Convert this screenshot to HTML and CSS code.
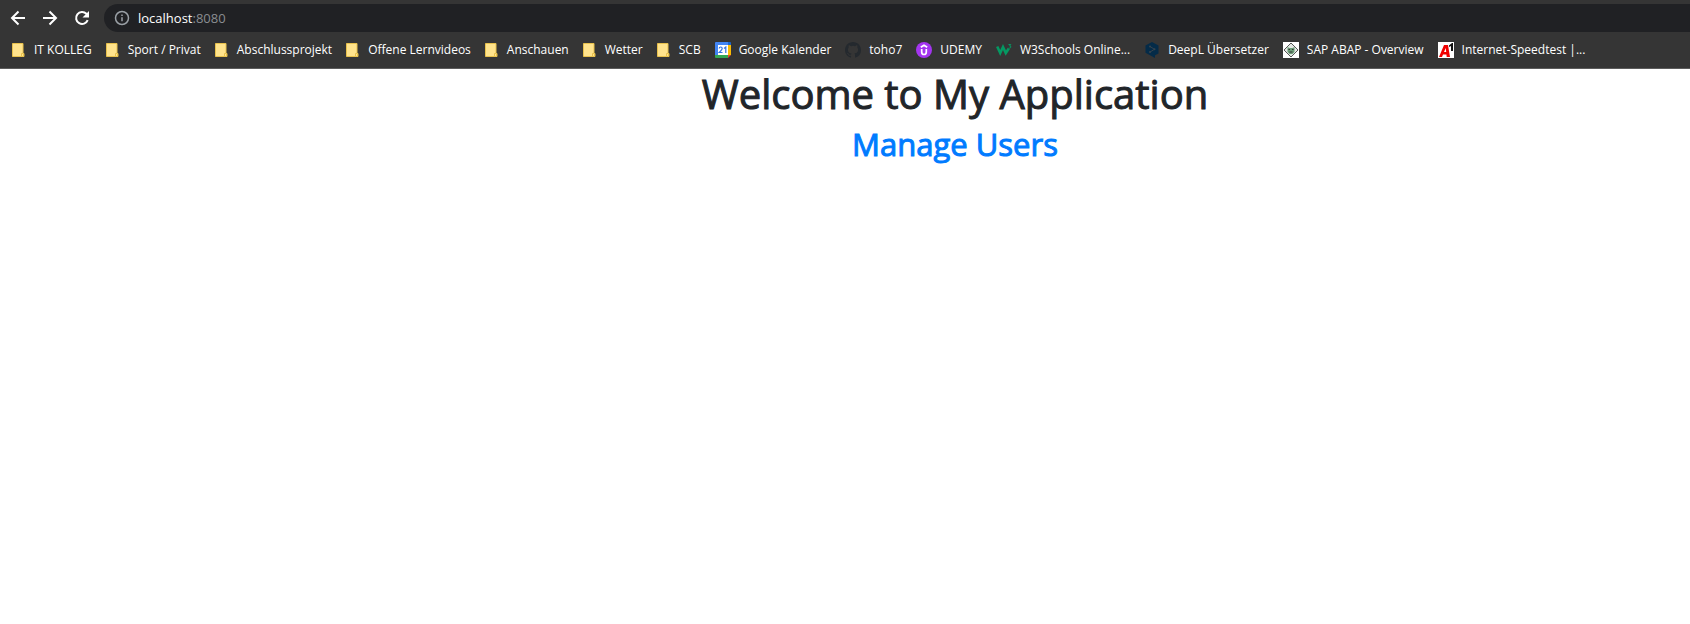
FILE: index.html
```html
<!DOCTYPE html>
<html lang="en">
<head>
<meta charset="utf-8">
<title>My Application</title>
<link rel="stylesheet" href="styles.css">
</head>
<body>
<svg width="0" height="0" class="defs" aria-hidden="true">
  <symbol id="folder" viewBox="0 0 16 16"><path d="M2.5 1.500h10.500v10h1v3h-11.500z" fill="#ffe38c" stroke="#e8c14c"/><path d="M11.500 14.500v-3h2v3z" fill="#ffe38c" stroke="#e8c14c"/></symbol>
</svg>
<header class="chrome">
  <div class="toolbar">
    <button class="nav" aria-label="Back"><svg viewBox="0 0 16 16"><path d="M15 8H2.500M8.500 1.500 2 8l6.500 6.500"/></svg></button>
    <button class="nav" aria-label="Forward"><svg viewBox="0 0 16 16"><path d="M1 8h12.500M7.500 1.500 14 8l-6.500 6.500"/></svg></button>
    <button class="nav" aria-label="Reload"><svg viewBox="0 0 16 16"><path d="M13.700 10.200A6 6 0 1 1 12.400 3.800L14 5.500"/><path d="M15 1v6.500H8.500z" class="solid"/></svg></button>
    <div class="address">
      <svg class="info" viewBox="0 0 16 16"><circle cx="8" cy="8" r="6.500"/><path d="M8 7.200v4M8 4.500v1.500"/></svg>
      <span class="host">localhost<span class="port">:8080</span></span>
    </div>
  </div>
  <nav class="bookmarks" aria-label="Bookmarks">
    <div class="group folders">
    <a href="#"><svg class="icon"><use href="#folder"/></svg>IT KOLLEG</a>
    <a href="#"><svg class="icon"><use href="#folder"/></svg>Sport / Privat</a>
    <a href="#"><svg class="icon"><use href="#folder"/></svg>Abschlussprojekt</a>
    <a href="#"><svg class="icon"><use href="#folder"/></svg>Offene Lernvideos</a>
    <a href="#"><svg class="icon"><use href="#folder"/></svg>Anschauen</a>
    <a href="#"><svg class="icon"><use href="#folder"/></svg>Wetter</a>
    <a href="#"><svg class="icon"><use href="#folder"/></svg>SCB</a>
    </div>
    <div class="group sites">
    <a href="#"><svg class="icon" viewBox="0 0 16 16"><path d="M0 1q0-1 1-1h12v13H0z" fill="#4285f4"/><path d="M13 3h3v10h-3z" fill="#fbbc04"/><path d="M0 13h13v3H1q-1 0-1-1z" fill="#34a853"/><path d="M13 0h2q1 0 1 1v2h-3z" fill="#1967d2"/><path d="M13 13h3l-3 3z" fill="#ea4335"/><path d="M3 3h10v10H3z" fill="#fff"/><path d="M4.200 6.500q0-1.500 1.500-1.500t1.500 1.500q0 1-3 4h3.300M9 6.500l1.800-1.500v6" fill="none" stroke="#3574e0" stroke-width="1.200"/></svg>Google Kalender</a>
    <a href="#"><svg class="icon" viewBox="0 0 16 16"><path fill="#24292e" d="M8 0C3.580 0 0 3.580 0 8c0 3.540 2.290 6.530 5.470 7.590.4.070.55-.17.55-.38 0-.19-.01-.82-.01-1.490-2.010.37-2.530-.49-2.690-.94-.09-.23-.48-.94-.82-1.130-.28-.15-.68-.52-.01-.53.63-.01 1.080.58 1.230.82.72 1.210 1.870.87 2.330.66.070-.52.28-.87.51-1.070-1.780-.2-3.640-.89-3.640-3.950 0-.87.31-1.590.82-2.150-.08-.2-.36-1.020.08-2.120 0 0 .67-.21 2.200.82a7.600 7.600 0 0 1 4 0c1.530-1.040 2.200-.82 2.200-.82.44 1.100.16 1.920.08 2.120.51.56.82 1.270.82 2.150 0 3.070-1.870 3.750-3.650 3.950.29.25.54.73.54 1.480 0 1.070-.01 1.930-.01 2.200 0 .21.15.46.55.38A8 8 0 0 0 16 8c0-4.420-3.580-8-8-8z"/></svg>toho7</a>
    <a href="#"><svg class="icon" viewBox="0 0 16 16"><circle cx="8" cy="8" r="8" fill="#a435f0"/><path d="M5.700 7v3q0 2.500 2.300 2.500t2.300-2.500V7M4.800 5.300 8 3.300l3.200 2" fill="none" stroke="#fff" stroke-width="1.700"/></svg>UDEMY</a>
    <a href="#"><svg class="icon" viewBox="0 0 16 16"><path d="M1.200 4.500l3 6.500 2.800-6 2.800 6 3-4.500" fill="none" stroke="#059862" stroke-width="2.600"/><path d="M12.500 2.500h2.300L13.600 4q2 .2 1 1.700-.7.800-1.800.2" fill="none" stroke="#059862"/></svg>W3Schools Online...</a>
    <a href="#"><svg class="icon" viewBox="0 0 16 16"><path d="M8 0l6.500 3.500v8L11 13.300V16l-4-2.200-5.500-3V3.500z" fill="#042b48"/><path d="M6 4.500l4.500 2.800L6 10" fill="none" stroke="#36434d"/><circle cx="6" cy="4.500" r="1" fill="#36434d"/><circle cx="10.500" cy="7.300" r="1" fill="#36434d"/><circle cx="6" cy="10" r="1" fill="#36434d"/></svg>DeepL Übersetzer</a>
    <a href="#"><svg class="icon" viewBox="0 0 16 16"><path d="M0 0h16v16H0z" fill="#fff"/><path d="M8 1l7 7-7 7-7-7z" fill="#e4e9e4" stroke="#555"/><path d="M4.500 5l2 1h3l2-1v5l-2 2h-3l-2-2z" fill="#6c9c78"/><path d="M5.500 7.500h1.500M9 7.500h1.500M6.500 10h3" stroke="#333"/></svg>SAP ABAP - Overview</a>
    <a href="#"><svg class="icon" viewBox="0 0 16 16"><path d="M0 0h16v16H0z" fill="#fff"/><path d="M1 15L6 3h4l2 12H8.700l-.3-2.500H5L4 15zM6 10h2.200L7.800 6z" fill="#f00000" fill-rule="evenodd"/><path d="M11 3.500L14 1h1v8h-2V4l-2 1z" fill="#111"/></svg>Internet-Speedtest |...</a>
    </div>
  </nav>
</header>
<main class="page">
  <h1>Welcome to My Application</h1>
  <h2><a href="#">Manage Users</a></h2>
</main>
</body>
</html>
```
FILE: styles.css
```css
* { box-sizing: border-box; }
body { margin: 0; background: #fff; font-family: "Open Sans", "Noto Sans", sans-serif; overflow-x: hidden; }
.defs { position: absolute; }
.chrome { background: #353535; border-bottom: 1px solid #5c5c5c; }
.toolbar { display: flex; align-items: center; padding: 4px 0 0 10px; }
.nav { width: 16px; height: 16px; margin-right: 16px; padding: 0; border: 0; background: none; }
.nav svg { display: block; width: 16px; height: 16px; fill: none; stroke: #fff; stroke-width: 2; }
.nav .solid { fill: #fff; stroke: none; }
.nav:nth-child(3) { margin-right: 14px; }
.address { flex: 1; display: flex; align-items: center; gap: 8px; height: 28px; padding-left: 10px; border-radius: 14px 0 0 14px; background: #202124; }
.info { width: 16px; height: 16px; fill: none; stroke: #9aa0a6; stroke-width: 1.5; }
.host { color: #fff; font-size: 13px; }
.port { color: #8a8d91; }
.bookmarks { display: flex; gap: 14px; height: 36px; padding: 0 10px; align-items: center; white-space: nowrap; }
.group { display: flex; }
.folders { gap: 12px; }
.sites { gap: 14px; }
.bookmarks a { display: flex; align-items: center; gap: 8px; color: #fff; font-size: 12px; line-height: 16px; text-decoration: none; }
.icon { width: 16px; height: 16px; flex: none; }
.page { padding: 1px 0 0 220px; text-align: center; }
h1, h2 { margin: 0; font-weight: 500; -webkit-text-stroke: 1px currentColor; }
h1 { font-size: 40px; line-height: 48px; margin-bottom: 4px; color: #212529; }
h2 { font-size: 31px; line-height: 44px; }
h2 a { color: #007bff; text-decoration: none; }
```
